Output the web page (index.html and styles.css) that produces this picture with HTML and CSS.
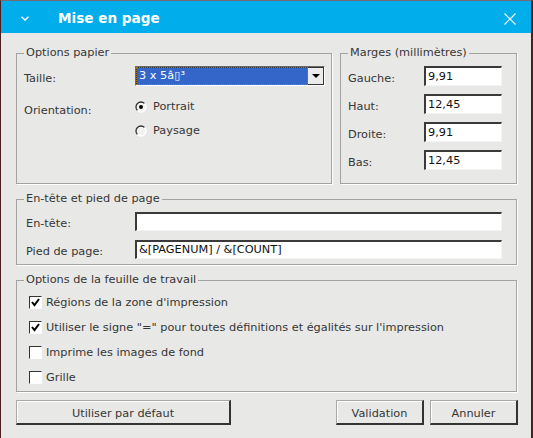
FILE: index.html
```html
<!DOCTYPE html>
<html lang="fr">
<head>
<meta charset="utf-8">
<title>Mise en page</title>
<link rel="stylesheet" href="styles.css">
</head>
<body>
<div class="window">
  <div class="titlebar">
    <svg class="chev" width="8" height="5" viewBox="0 0 8 5"><path d="M0.5 0.8 L4 4 L7.5 0.8" stroke="#fff" stroke-width="1.4" fill="none"/></svg>
    <span class="title">Mise en page</span>
    <svg class="close" width="12" height="12" viewBox="0 0 12 12"><path d="M0.5 0.5 L11.5 11.5 M11.5 0.5 L0.5 11.5" stroke="#fff" stroke-width="1.1" fill="none"/></svg>
  </div>
  <div class="content">
    <div class="toprow">
      <fieldset class="group g-paper">
        <legend>Options papier</legend>
        <div class="inner paper">
          <span class="lbl">Taille:</span>
          <div class="select">
            <span class="value">3 x 5â▯³</span>
            <span class="arrow"><svg width="8" height="4" viewBox="0 0 8 4"><path d="M0 0 H8 L4 4 Z" fill="#000"/></svg></span>
          </div>
          <span class="lbl orient">Orientation:</span>
          <div class="radios">
            <label class="radio"><svg width="12" height="12" viewBox="0 0 12 12"><circle cx="6" cy="6" r="5" fill="#f2f2f2"/><path d="M9.54 2.46 A5 5 0 0 0 2.46 9.54" stroke="#333" stroke-width="1.3" fill="none"/><path d="M2.46 9.54 A5 5 0 0 0 9.54 2.46" stroke="#fff" stroke-width="1.3" fill="none"/><circle cx="6" cy="6" r="2" fill="#000"/></svg>Portrait</label>
            <label class="radio"><svg width="12" height="12" viewBox="0 0 12 12"><circle cx="6" cy="6" r="5" fill="#f2f2f2"/><path d="M9.54 2.46 A5 5 0 0 0 2.46 9.54" stroke="#333" stroke-width="1.3" fill="none"/><path d="M2.46 9.54 A5 5 0 0 0 9.54 2.46" stroke="#fff" stroke-width="1.3" fill="none"/></svg>Paysage</label>
          </div>
        </div>
      </fieldset>
      <fieldset class="group g-margins">
        <legend>Marges (millimètres)</legend>
        <div class="inner margins">
          <span class="lbl">Gauche:</span><span class="field">9,91</span>
          <span class="lbl">Haut:</span><span class="field">12,45</span>
          <span class="lbl">Droite:</span><span class="field">9,91</span>
          <span class="lbl">Bas:</span><span class="field">12,45</span>
        </div>
      </fieldset>
    </div>
    <fieldset class="group g-header">
      <legend>En-tête et pied de page</legend>
      <div class="inner header">
        <span class="lbl">En-tête:</span><span class="field wide"></span>
        <span class="lbl">Pied de page:</span><span class="field wide">&amp;[PAGENUM] / &amp;[COUNT]</span>
      </div>
    </fieldset>
    <fieldset class="group g-sheet">
      <legend>Options de la feuille de travail</legend>
      <div class="inner sheet">
        <label class="check"><span class="box"><svg width="11" height="11" viewBox="0 0 11 11"><path d="M2 5 L4.5 8.2 L9 2" stroke="#000" stroke-width="2" fill="none"/></svg></span>Régions de la zone d'impression</label>
        <label class="check"><span class="box"><svg width="11" height="11" viewBox="0 0 11 11"><path d="M2 5 L4.5 8.2 L9 2" stroke="#000" stroke-width="2" fill="none"/></svg></span>Utiliser le signe "=" pour toutes définitions et égalités sur l'impression</label>
        <label class="check"><span class="box"></span>Imprime les images de fond</label>
        <label class="check"><span class="box"></span>Grille</label>
      </div>
    </fieldset>
    <div class="buttons">
      <button class="btn btn-default">Utiliser par défaut</button>
      <span class="spacer"></span>
      <button class="btn btn-small">Validation</button>
      <button class="btn btn-small">Annuler</button>
    </div>
  </div>
</div>
</body>
</html>
```

FILE: styles.css
```css
* { box-sizing: border-box; }
html, body { margin: 0; padding: 0; }
body {
  font-family: "DejaVu Sans", sans-serif;
  font-size: 11.3px;
  color: #363636;
  background: #e8e8e6;
}
.window {
  width: 533px;
  height: 438px;
  background: #e8e8e6;
  border-left: 1px solid #4a1f1f;
  border-right: 2px solid #4a1f1f;
  border-top: 1px solid #7a6a6a;
  overflow: hidden;
}
.titlebar {
  height: 32px;
  background: #02adec;
  display: flex;
  align-items: center;
  color: #fff;
}
.chev { margin-left: 20px; margin-top: 3px; }
.title {
  margin-left: 29px;
  font-weight: bold;
  font-size: 13.6px;
  flex: 1;
  padding-top: 1px;
}
.close { margin-right: 15px; margin-top: 4px; }
.content {
  padding: 13px 0 0 15px;
}
.toprow {
  display: flex;
  gap: 8px;
}
.group {
  margin: 0;
  padding: 0;
  border: 1px solid #a3a3a3;
  box-shadow: 1px 1px 0 #fff;
  min-width: 0;
}
.group legend {
  margin-left: 7px;
  padding: 0 2px;
  line-height: 14px;
  height: 14px;
}
.g-paper { width: 316px; height: 138px; }
.g-margins { width: 177px; height: 138px; }
.g-header { width: 501px; margin-top: 8px; }
.g-sheet { width: 501px; margin-top: 8px; }
.lbl {
  height: 20px;
  padding-top: 5px;
  line-height: 15px;
}

.paper {
  display: grid;
  grid-template-columns: 111px 190px;
  padding: 6px 0 0 7px;
}
.select {
  display: flex;
  height: 20px;
  border: 1px solid;
  border-color: #6a6a6a #fff #fff #6a6a6a;
}
.select .value {
  flex: 1;
  background: #3366c8;
  color: #fff;
  line-height: 16px;
  padding-left: 2px;
  outline: 1px dotted #b07800;
  outline-offset: -1px;
  border-top: 1px solid #333;
  border-left: 1px solid #333;
}
.select .arrow {
  width: 16px;
  background: #ececec;
  border-right: 1px solid #333;
  border-bottom: 1px solid #333;
  border-top: 1px solid #333;
  display: flex;
  align-items: center;
  justify-content: center;
}
.orient { margin-top: 12px; }
.radios {
  margin-top: 12px;
  display: flex;
  flex-direction: column;
  gap: 8px;
}
.radio {
  display: flex;
  align-items: center;
  gap: 6px;
  height: 16px;
  padding-top: 1px;
}

.margins {
  display: grid;
  grid-template-columns: 76px 78px;
  row-gap: 8px;
  padding: 6px 0 0 7px;
}
.field {
  display: block;
  height: 20px;
  background: #fff;
  border-top: 2px solid #3a3a3a;
  border-left: 2px solid #3a3a3a;
  border-right: 1px solid #f4f4f4;
  border-bottom: 1px solid #f4f4f4;
  padding-left: 2px;
  line-height: 17px;
  color: #111;
}
.header {
  display: grid;
  grid-template-columns: 109px 367px;
  row-gap: 9px;
  padding: 6px 0 5px 9px;
}
.header .lbl { height: 19px; padding-top: 4px; }
.field.wide { height: 19px; line-height: 16px; }

.sheet {
  display: flex;
  flex-direction: column;
  gap: 9px;
  padding: 7px 0 6px 12px;
}
.check {
  display: flex;
  align-items: center;
  height: 16px;
  gap: 4px;
  padding-top: 1px;
}
.box {
  width: 13px;
  height: 13px;
  background: #fff;
  border-top: 1px solid #333;
  border-left: 1px solid #333;
  border-right: 1px solid #fdfdfd;
  border-bottom: 1px solid #fdfdfd;
  display: flex;
  align-items: center;
  justify-content: center;
}
.buttons {
  display: flex;
  margin-top: 8px;
  width: 502px;
}
.spacer { flex: 1; }
.btn {
  height: 25px;
  font: inherit;
  color: #363636;
  background: #e8e8e6;
  border-top: 1px solid #a8a8a8;
  border-left: 1px solid #a8a8a8;
  border-right: 2px solid #333;
  border-bottom: 2px solid #333;
  box-shadow: inset 1px 1px 0 #fff;
  padding: 2px 0 0 0;
  margin: 0;
}
.btn-default { width: 215px; }
.btn-small { width: 88px; margin-left: 6px; }
```
